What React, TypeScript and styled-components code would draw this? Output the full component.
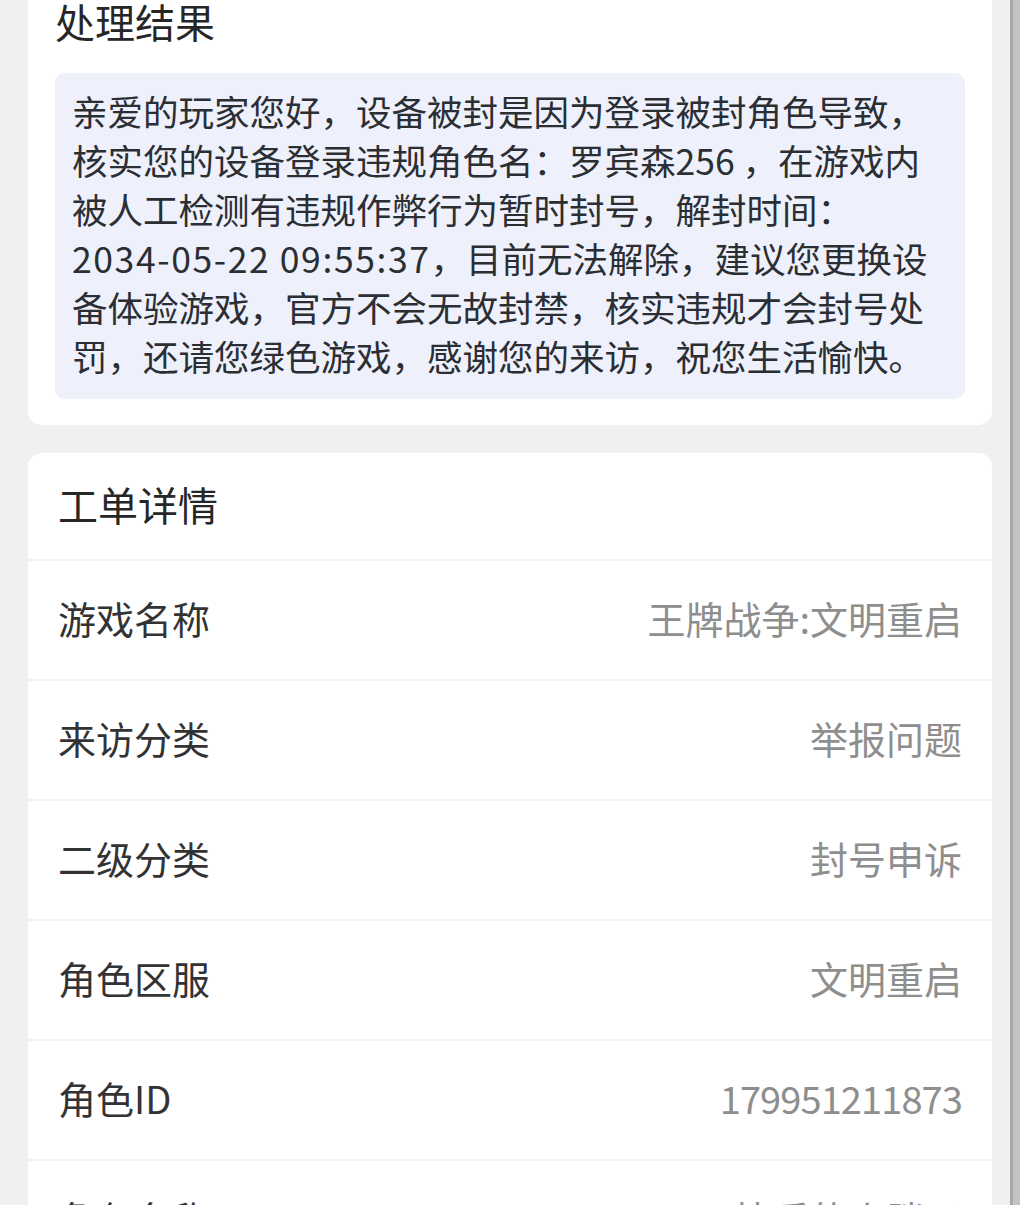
import React from "react";
import styled, { createGlobalStyle } from "styled-components";

const GlobalStyle = createGlobalStyle`
  html, body {
    margin: 0;
    padding: 0;
    background: #f0f0f0;
    overflow: hidden;
  }
  body {
    font-family: "Noto Sans CJK SC", "Noto Sans", sans-serif;
    font-weight: 400;
    -webkit-font-smoothing: antialiased;
  }
`;

const Page = styled.div`
  display: flex;
  min-height: 1205px;
  width: 1020px;
  background: #f0f0f0;
`;

const Main = styled.main`
  flex: 1;
  display: flex;
  flex-direction: column;
  gap: 28px;
  padding: 0 18px 0 28px;
`;

const Rail = styled.div`
  width: 10px;
  flex: none;
  background: #c3c3c3;
  border-left: 3px solid #a9a9a9;
  box-sizing: border-box;
`;

const Card = styled.section<{ $cutTop?: boolean }>`
  background: #ffffff;
  border-radius: ${(p) => (p.$cutTop ? "0 0 14px 14px" : "14px")};
  overflow: hidden;
`;

const ResultCard = styled(Card)`
  padding: 0 27px 26px 27px;
`;

const CardTitle = styled.h2`
  margin: 0;
  font-size: 40px;
  font-weight: 400;
  line-height: 42px;
  color: #262626;
`;

const MessageBox = styled.div`
  margin-top: 31px;
  background: #eef1fb;
  border-radius: 10px;
  padding: 13px 17px 19px 17px;
  color: #2b2e33;
  font-size: 35.5px;
  line-height: 49px;
`;

const MessageLine = styled.span`
  display: block;
  white-space: nowrap;
`;

const Digits = styled.span`
  letter-spacing: 1.6px;
`;

const DetailHeader = styled.div`
  height: 106px;
  display: flex;
  align-items: center;
  padding: 0 30px 4px;
  box-sizing: border-box;
  font-size: 40px;
  color: #262626;
`;

const DetailRow = styled.div`
  height: 120px;
  box-sizing: border-box;
  border-top: 2px solid #f3f3f3;
  display: flex;
  align-items: center;
  justify-content: space-between;
  padding: 0 30px 6px;
  font-size: 38px;
`;

const Label = styled.span`
  color: #333333;
`;

const Value = styled.span<{ $numeric?: boolean }>`
  color: #8e8e8e;
  text-align: right;
  letter-spacing: ${(p) => (p.$numeric ? "-0.9px" : "0")};
`;

const details: { label: string; value: string; numeric?: boolean }[] = [
  { label: "游戏名称", value: "王牌战争:文明重启" },
  { label: "来访分类", value: "举报问题" },
  { label: "二级分类", value: "封号申诉" },
  { label: "角色区服", value: "文明重启" },
  { label: "角色ID", value: "179951211873", numeric: true },
  { label: "角色名称", value: "快乐的小胖子" },
];

export default function App() {
  return (
    <>
      <GlobalStyle />
      <Page>
        <Main>
          <ResultCard $cutTop>
            <CardTitle>处理结果</CardTitle>
            <MessageBox>
              <MessageLine>亲爱的玩家您好，设备被封是因为登录被封角色导致，</MessageLine>
              <MessageLine>核实您的设备登录违规角色名：罗宾森256 ，在游戏内</MessageLine>
              <MessageLine>被人工检测有违规作弊行为暂时封号，解封时间：</MessageLine>
              <MessageLine>
                <Digits>2034-05-22 09:55:37</Digits>，目前无法解除，建议您更换设
              </MessageLine>
              <MessageLine>备体验游戏，官方不会无故封禁，核实违规才会封号处</MessageLine>
              <MessageLine>罚，还请您绿色游戏，感谢您的来访，祝您生活愉快。</MessageLine>
            </MessageBox>
          </ResultCard>
          <Card>
            <DetailHeader>工单详情</DetailHeader>
            {details.map((d) => (
              <DetailRow key={d.label}>
                <Label>{d.label}</Label>
                <Value $numeric={d.numeric}>{d.value}</Value>
              </DetailRow>
            ))}
          </Card>
        </Main>
        <Rail />
      </Page>
    </>
  );
}
